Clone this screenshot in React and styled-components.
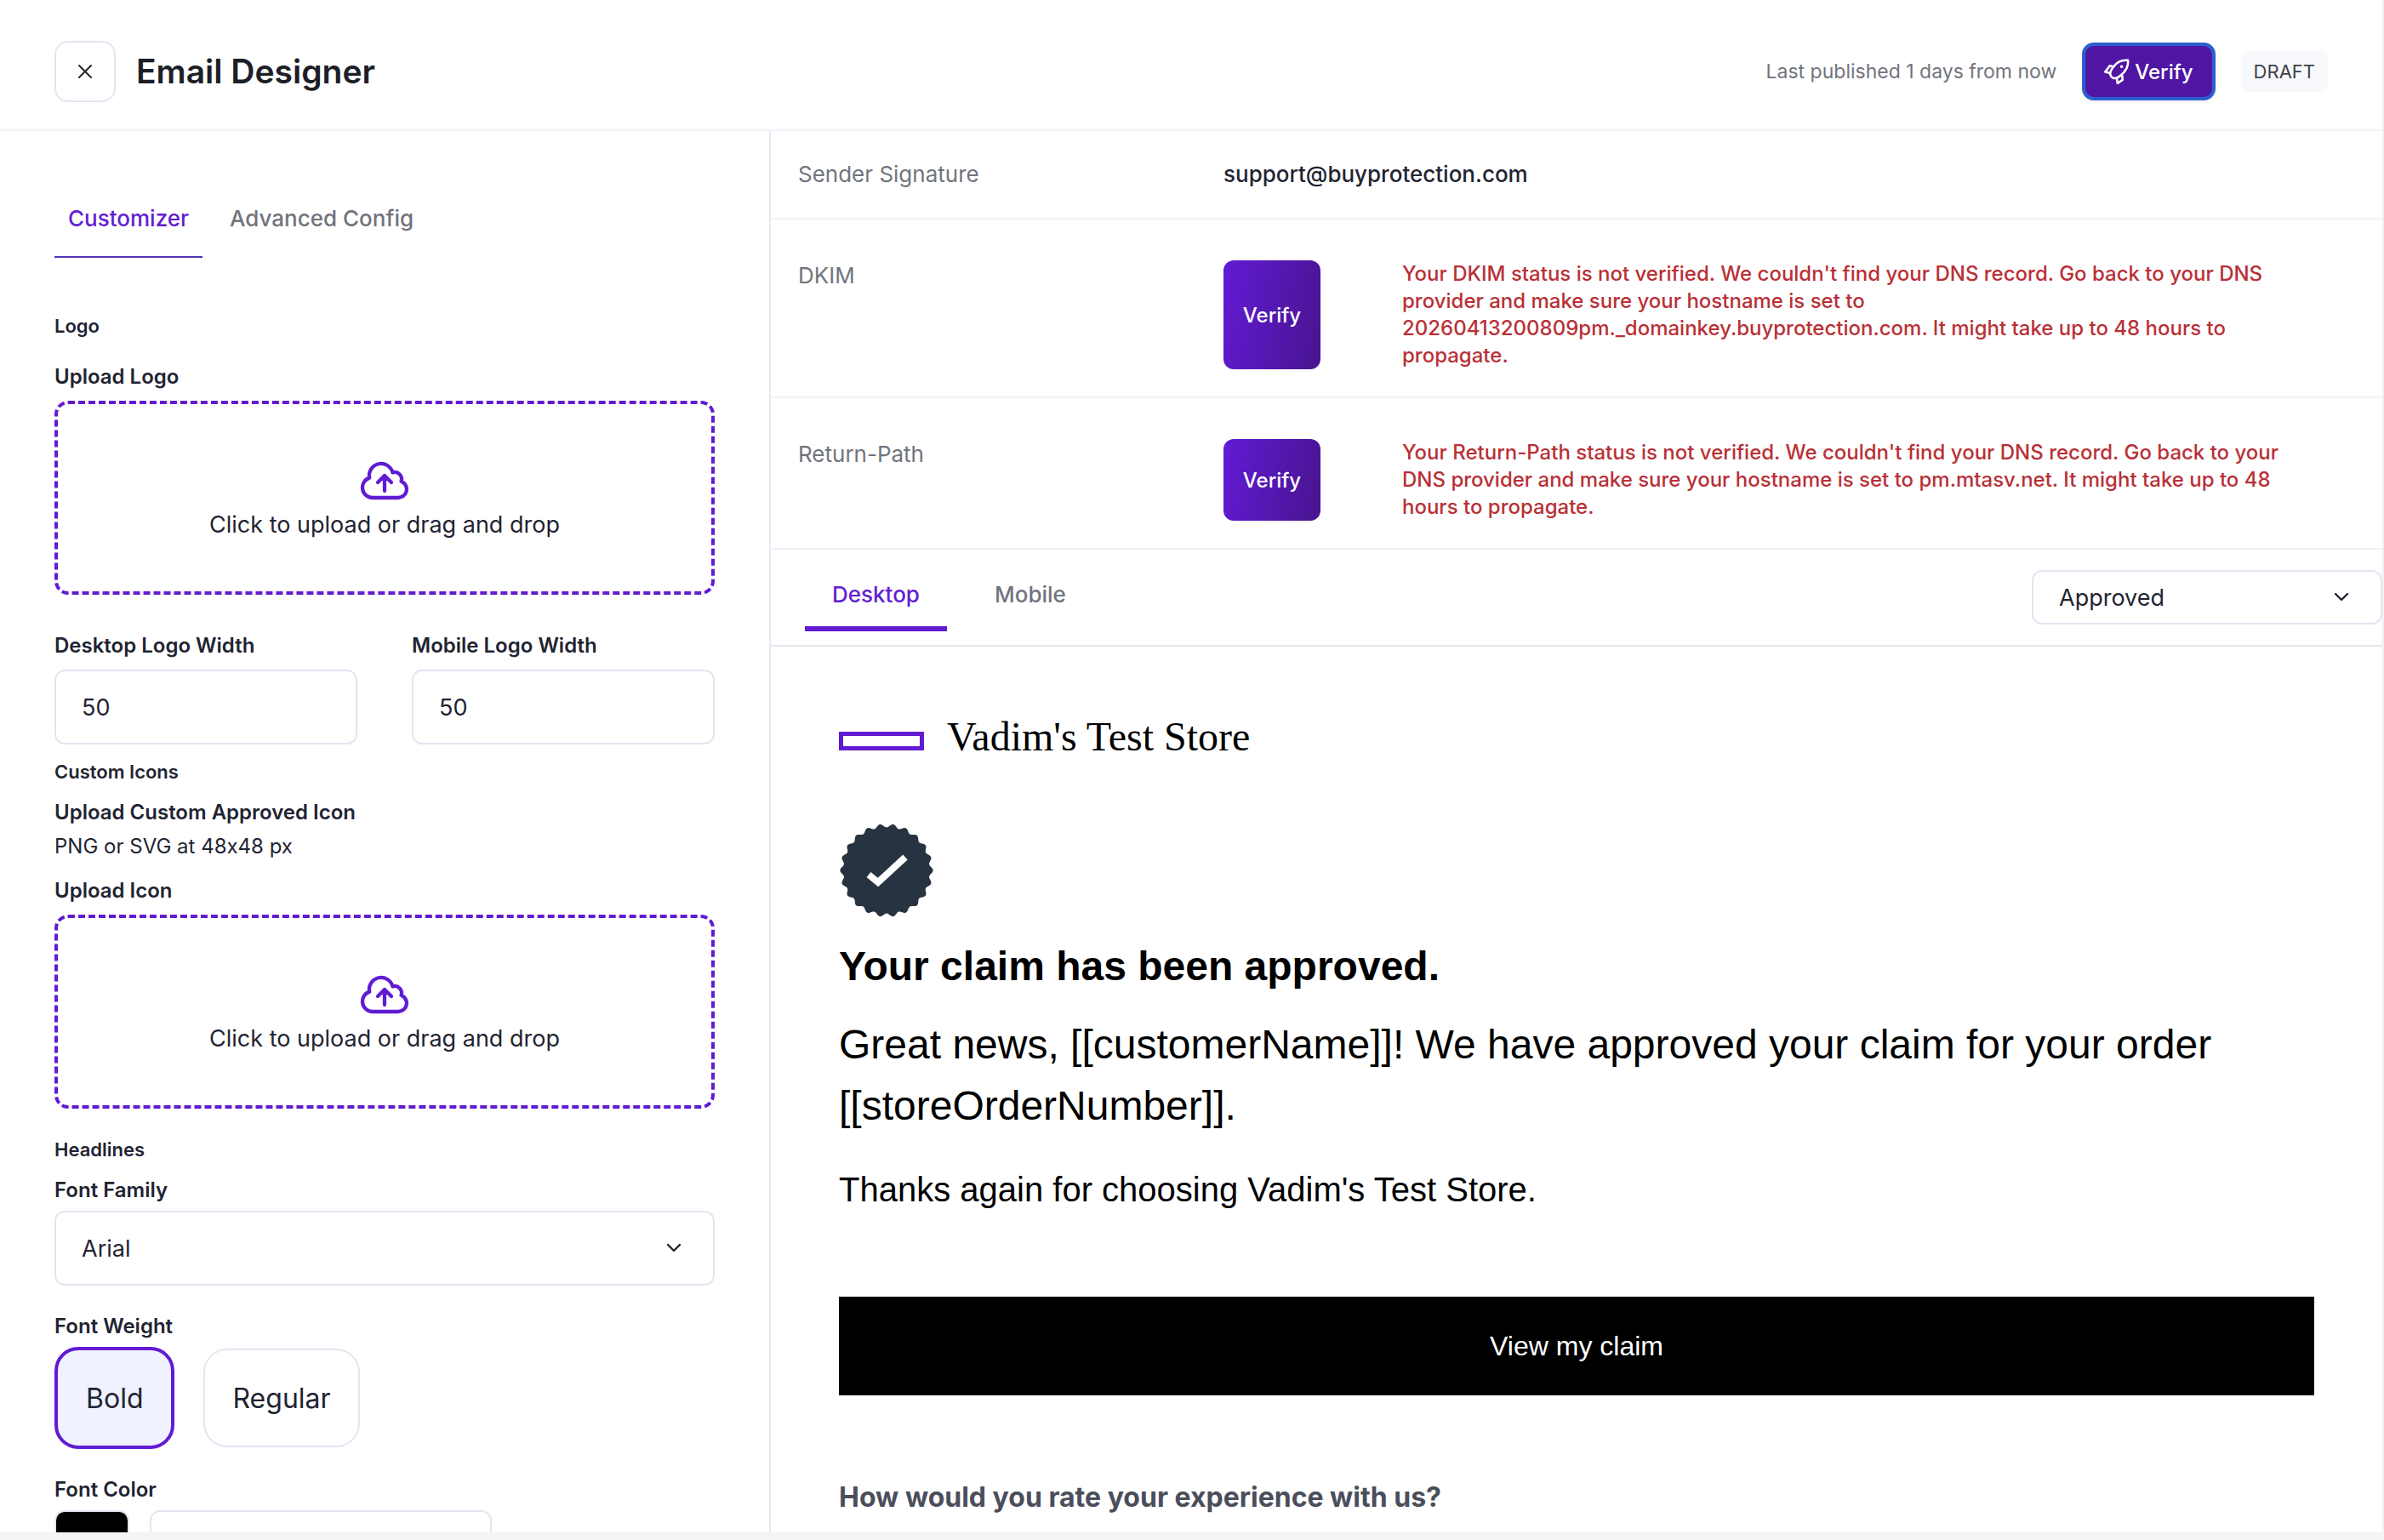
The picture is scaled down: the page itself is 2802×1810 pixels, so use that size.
import { useState } from "react";
import styled, { createGlobalStyle, css } from "styled-components";

const GlobalStyle = createGlobalStyle`
  *, *::before, *::after {
    box-sizing: border-box;
  }

  body {
    margin: 0;
    background: #f4f4f4;
    color: #1f2432;
    font-family: Inter, "Liberation Sans", sans-serif;
    font-size: 24px;
    line-height: 32px;
    font-variant-ligatures: no-contextual;
    -webkit-font-smoothing: antialiased;
  }

  button, input, select {
    font-family: inherit;
    color: inherit;
    margin: 0;
  }

  h1, h2, h3, p, dl, dt, dd {
    margin: 0;
  }
`;

const Page = styled.div`
  display: flex;
  flex-direction: column;
  height: calc(100vh - 9px);
  background: #fff;
  border-right: 2px solid #f1f1f3;
`;

/* ---------- header ---------- */

const Header = styled.header`
  display: flex;
  align-items: center;
  justify-content: space-between;
  flex-shrink: 0;
  padding: 48px 64px 32px;
  border-bottom: 2px solid #f1f2f8;
`;

const HeaderGroup = styled.div`
  display: flex;
  align-items: center;
  gap: ${({ $gap }) => $gap}px;
`;

const CloseButton = styled.button`
  display: grid;
  place-items: center;
  width: 72px;
  height: 72px;
  padding: 0;
  background: #fff;
  border: 2px solid #e2e6f0;
  border-radius: 16px;
  cursor: pointer;
`;

const Title = styled.h1`
  font-size: 39px;
  line-height: 48px;
  font-weight: 600;
  color: #1d1e27;
`;

const Published = styled.span`
  color: #71747d;
  font-size: 23px;
`;

const PublishButton = styled.button`
  display: flex;
  align-items: center;
  gap: 6px;
  height: 68px;
  padding: 0 22px;
  background: #5016a3;
  border: 4px solid #2b5fd0;
  border-radius: 14px;
  box-shadow: 0 2px 4px rgba(0, 0, 0, 0.06);
  color: #fff;
  font-size: 24px;
  font-weight: 500;
  cursor: pointer;
`;

const StatusTag = styled.span`
  padding: 8px 15px;
  background: #f8f9fc;
  border-radius: 8px;
  color: #3f424b;
  font-size: 22px;
`;

/* ---------- layout ---------- */

const Main = styled.main`
  display: grid;
  grid-template-columns: minmax(0, 906fr) minmax(0, 1894fr);
  flex: 1;
  min-height: 0;
`;

const Sidebar = styled.aside`
  padding: 64px 64px 0;
  border-right: 2px solid #e6eaf2;
  overflow: hidden;
`;

const Preview = styled.section`
  overflow: hidden;
`;

const Tabs = styled.div`
  display: flex;
  gap: ${({ $gap }) => $gap}px;
`;

const Tab = styled.button`
  padding: 22px 16px 27px;
  background: none;
  border: 0;
  border-bottom: 2px solid ${({ $active }) => ($active ? "#5433b4" : "transparent")};
  color: ${({ $active }) => ($active ? "#6220d2" : "#71747d")};
  font-size: 26px;
  line-height: 34px;
  font-weight: 500;
  cursor: pointer;
`;

const PreviewTab = styled(Tab)`
  padding: 36px 32px 20px;
  border-bottom: 6px solid ${({ $active }) => ($active ? "#611bd3" : "transparent")};
`;

/* ---------- customizer form ---------- */

const SectionTitle = styled.h2`
  margin-top: ${({ $top }) => $top}px;
  font-size: 22px;
  line-height: 32px;
  font-weight: 600;
`;

const Field = styled.div`
  display: flex;
  flex-direction: column;
  gap: ${({ $gap = 8 }) => $gap}px;
  margin-top: ${({ $top = 0 }) => $top}px;
`;

const labelText = css`
  font-size: 24px;
  line-height: 32px;
  font-weight: 600;
`;

const Label = styled.label`
  ${labelText}
`;

const LabelText = styled.h3`
  ${labelText}
`;

const Hint = styled.p`
  font-size: 24px;
`;

const FieldRow = styled.div`
  display: grid;
  grid-template-columns: 1fr 1fr;
  gap: 64px;
  margin-top: 44px;
`;

const control = css`
  width: 100%;
  height: 88px;
  padding: 0 30px;
  background: #fff;
  border: 2px solid #e2e6f0;
  border-radius: 12px;
  font-size: 27px;
`;

const TextInput = styled.input`
  ${control}
`;

const SelectWrap = styled.div`
  position: relative;

  svg {
    position: absolute;
    top: 50%;
    right: 38px;
    transform: translateY(-50%);
    pointer-events: none;
  }
`;

const Select = styled.select`
  ${control}
  appearance: none;
  cursor: pointer;
`;

const CompactSelect = styled(Select)`
  width: 412px;
  height: 64px;
`;

const DropZone = styled.label`
  display: flex;
  flex-direction: column;
  align-items: center;
  justify-content: center;
  position: relative;
  height: 228px;
  border: 4px dashed #611bd3;
  border-radius: 16px;
  font-size: 27px;
  line-height: 40px;
  cursor: pointer;

  input {
    position: absolute;
    inset: 0;
    opacity: 0;
    cursor: pointer;
  }
`;

const WeightOptions = styled.div`
  display: flex;
  align-items: center;
  gap: 34px;
`;

const WeightButton = styled.button`
  height: ${({ $active }) => ($active ? 120 : 116)}px;
  padding: 0 ${({ $active }) => ($active ? 33 : 32)}px;
  background: ${({ $active }) => ($active ? "#f0f2ff" : "#fff")};
  border: ${({ $active }) => ($active ? "4px solid #611bd3" : "2px solid #e2e6f0")};
  border-radius: 28px;
  font-size: 32px;
  cursor: pointer;
`;

const ColorRow = styled.div`
  display: flex;
  gap: 24px;
`;

const Swatch = styled.input`
  flex-shrink: 0;
  width: 88px;
  height: 88px;
  padding: 0;
  background: #fff;
  border: 2px solid #e2e6f0;
  border-radius: 12px;
  overflow: hidden;

  &::-webkit-color-swatch-wrapper {
    padding: 0;
  }

  &::-webkit-color-swatch {
    border: 0;
  }
`;

const HexInput = styled(TextInput)`
  width: 402px;
`;

/* ---------- domain verification ---------- */

const Row = styled.div`
  display: grid;
  grid-template-columns: 500px minmax(0, 1fr);
  padding: ${({ $plain }) => ($plain ? "33px 32px" : "48px 32px 32px")};
  border-bottom: 2px solid #f1f2f8;
`;

const Term = styled.dt`
  color: #71747d;
  font-size: 26px;
  line-height: 36px;
`;

const Detail = styled.dd`
  display: flex;
  gap: 96px;
  font-size: 26px;
  line-height: 36px;
  font-weight: 500;
`;

const VerifyButton = styled.button`
  flex-shrink: 0;
  width: 114px;
  background: linear-gradient(100deg, #621bd5, #48148f);
  border: 0;
  border-radius: 12px;
  color: #fff;
  font-size: 24px;
  font-weight: 500;
  cursor: pointer;
`;

const ErrorText = styled.p`
  max-width: 1040px;
  color: #b93036;
  font-size: 24px;
  line-height: 32px;
  font-weight: 500;
`;

const PreviewBar = styled.div`
  display: flex;
  align-items: center;
  justify-content: space-between;
  padding: 0 0 16px 40px;
  border-bottom: 2px solid #e2e6ec;

  ${SelectWrap} {
    margin-top: 16px;
  }
`;

/* ---------- email ---------- */

const Email = styled.article`
  padding: 80px;
  color: #000;
  font-family: "Liberation Sans", Arial, sans-serif;
`;

const Brand = styled.div`
  display: flex;
  align-items: baseline;
  gap: 27px;
  height: 64px;
`;

const BrandMark = styled.span`
  width: 100px;
  height: 22px;
  border: 5px solid #611bd3;
`;

const BrandName = styled.span`
  font-family: "Liberation Serif", serif;
  font-size: 48px;
  line-height: 52px;
`;

const Badge = styled.svg`
  display: block;
  margin-top: 64px;
`;

const Headline = styled.h2`
  margin-top: 24px;
  font-size: 48px;
  line-height: 64px;
  font-weight: 700;
`;

const Lead = styled.p`
  margin-top: 24px;
  font-size: 48px;
  line-height: 72px;
`;

const Body = styled.p`
  margin-top: 32px;
  font-size: 40px;
  line-height: 60px;
`;

const ClaimLink = styled.a`
  display: block;
  margin-top: 96px;
  background: #000;
  color: #fff;
  font-size: 32px;
  line-height: 116px;
  text-align: center;
  text-decoration: none;
`;

const RateTitle = styled.h3`
  margin-top: 96px;
  color: #4a4e5b;
  font-family: Inter, sans-serif;
  font-size: 32px;
  line-height: 48px;
  font-weight: 700;
`;

/* ---------- icons ---------- */

const CloseIcon = () => (
  <svg width="20" height="20" viewBox="0 0 20 20" fill="none" stroke="#23252d" strokeWidth="2" strokeLinecap="round" aria-hidden="true">
    <path d="M3 3l14 14M17 3L3 17" />
  </svg>
);

const RocketIcon = () => (
  <svg width="30" height="30" viewBox="0 0 30 30" fill="none" stroke="currentColor" strokeWidth="2.6" strokeLinecap="round" strokeLinejoin="round" aria-hidden="true">
    <path d="M28 1.8C21 1.2 15 4 11 9.500C8.300 13 7 16 7.200 18C7.400 20.500 9.600 22.700 12 23C14.500 23.200 17.500 21.500 20.500 18.800C25.500 14.500 28.800 8.500 28 1.800Z" />
    <path d="M11 9.400L6.800 8.200L1.400 15.400L7 17" />
    <path d="M14.800 22.600L15.800 28.800L21.800 24.800L21 18.600" />
    <circle cx="20.600" cy="9.200" r="1.700" fill="currentColor" stroke="none" />
  </svg>
);

const CloudUploadIcon = () => (
  <svg width="64" height="64" viewBox="0 0 24 24" fill="none" stroke="#611bd3" strokeWidth="1.6" strokeLinecap="round" strokeLinejoin="round" aria-hidden="true">
    <path d="M12 16.500V9.750m0 0 3 3m-3-3-3 3M6.750 19.500a4.500 4.500 0 0 1-1.410-8.775 5.250 5.250 0 0 1 10.233-2.330 3 3 0 0 1 3.758 3.848A3.752 3.752 0 0 1 18 19.500H6.750Z" />
  </svg>
);

const ChevronIcon = () => (
  <svg width="20" height="20" viewBox="0 0 20 20" fill="none" stroke="#1f2432" strokeWidth="2.4" strokeLinecap="round" strokeLinejoin="round" aria-hidden="true">
    <path d="M3 6l7 7 7-7" />
  </svg>
);

const TEETH = 22;

const badgePath = () => {
  const steps = TEETH * 8;
  const points = Array.from({ length: steps }, (_, i) => {
    const angle = (i / steps) * Math.PI * 2;
    const radius = 52.6 + 2.1 * Math.cos(angle * TEETH);
    return `${(55 + radius * Math.cos(angle)).toFixed(2)} ${(55 + radius * Math.sin(angle)).toFixed(2)}`;
  });
  return `M${points.join("L")}Z`;
};

const ApprovedBadge = () => (
  <Badge width="112" height="112" viewBox="-1 0 112 112" role="img" aria-label="Approved">
    <path d={badgePath()} fill="#283341" />
    <path d="M34 60L45 69L77 39.500" fill="none" stroke="#fff" strokeWidth="8" />
  </Badge>
);

/* ---------- parts ---------- */

const UploadField = ({ id, label, top }) => (
  <Field $top={top} $gap={12}>
    <Label htmlFor={id}>{label}</Label>
    <DropZone>
      <CloudUploadIcon />
      Click to upload or drag and drop
      <input id={id} type="file" accept="image/*" />
    </DropZone>
  </Field>
);

const VerifyRow = ({ name, children }) => (
  <Row>
    <Term>{name}</Term>
    <Detail>
      <VerifyButton type="button">Verify</VerifyButton>
      <ErrorText>{children}</ErrorText>
    </Detail>
  </Row>
);

export default function App() {
  const [tab, setTab] = useState("Customizer");
  const [device, setDevice] = useState("Desktop");
  const [weight, setWeight] = useState("Bold");
  const [color, setColor] = useState("#000000");

  return (
    <>
      <GlobalStyle />
      <Page>
        <Header>
          <HeaderGroup $gap={24}>
            <CloseButton type="button" aria-label="Close">
              <CloseIcon />
            </CloseButton>
            <Title>Email Designer</Title>
          </HeaderGroup>
          <HeaderGroup $gap={30}>
            <Published>Last published 1 days from now</Published>
            <PublishButton type="button">
              <RocketIcon />
              Verify
            </PublishButton>
            <StatusTag>DRAFT</StatusTag>
          </HeaderGroup>
        </Header>

        <Main>
          <Sidebar>
            <Tabs role="tablist" $gap={16}>
              {["Customizer", "Advanced Config"].map((name) => (
                <Tab key={name} type="button" role="tab" aria-selected={tab === name} $active={tab === name} onClick={() => setTab(name)}>
                  {name}
                </Tab>
              ))}
            </Tabs>

            <SectionTitle $top={64}>Logo</SectionTitle>
            <UploadField id="logo" label="Upload Logo" top={28} />
            <FieldRow>
              <Field $gap={12}>
                <Label htmlFor="desktop-width">Desktop Logo Width</Label>
                <TextInput id="desktop-width" defaultValue="50" />
              </Field>
              <Field $gap={12}>
                <Label htmlFor="mobile-width">Mobile Logo Width</Label>
                <TextInput id="mobile-width" defaultValue="50" />
              </Field>
            </FieldRow>

            <SectionTitle $top={16}>Custom Icons</SectionTitle>
            <Field $top={16}>
              <LabelText>Upload Custom Approved Icon</LabelText>
              <Hint>PNG or SVG at 48x48 px</Hint>
            </Field>
            <UploadField id="icon" label="Upload Icon" top={20} />

            <SectionTitle $top={32}>Headlines</SectionTitle>
            <Field $top={16}>
              <Label htmlFor="font-family">Font Family</Label>
              <SelectWrap>
                <Select id="font-family" defaultValue="Arial">
                  <option>Arial</option>
                  <option>Georgia</option>
                </Select>
                <ChevronIcon />
              </SelectWrap>
            </Field>
            <Field $top={32}>
              <LabelText id="font-weight">Font Weight</LabelText>
              <WeightOptions role="group" aria-labelledby="font-weight">
                {["Bold", "Regular"].map((name) => (
                  <WeightButton key={name} type="button" aria-pressed={weight === name} $active={weight === name} onClick={() => setWeight(name)}>
                    {name}
                  </WeightButton>
                ))}
              </WeightOptions>
            </Field>
            <Field $top={32}>
              <Label htmlFor="font-color">Font Color</Label>
              <ColorRow>
                <Swatch id="font-color" type="color" value={color} onChange={(e) => setColor(e.target.value)} />
                <HexInput aria-label="Font color hex" value={color} onChange={(e) => setColor(e.target.value)} />
              </ColorRow>
            </Field>
          </Sidebar>

          <Preview>
            <dl>
              <Row $plain>
                <Term>Sender Signature</Term>
                <Detail>support@buyprotection.com</Detail>
              </Row>
              <VerifyRow name="DKIM">
                Your DKIM status is not verified. We couldn't find your DNS record. Go back to your DNS provider and make sure your hostname is set to 20260413200809pm._domainkey.buyprotection.com. It might take up to 48 hours to propagate.
              </VerifyRow>
              <VerifyRow name="Return-Path">
                Your Return-Path status is not verified. We couldn't find your DNS record. Go back to your DNS provider and make sure your hostname is set to pm.mtasv.net. It might take up to 48 hours to propagate.
              </VerifyRow>
            </dl>

            <PreviewBar>
              <Tabs role="tablist" $gap={24}>
                {["Desktop", "Mobile"].map((name) => (
                  <PreviewTab key={name} type="button" role="tab" aria-selected={device === name} $active={device === name} onClick={() => setDevice(name)}>
                    {name}
                  </PreviewTab>
                ))}
              </Tabs>
              <SelectWrap>
                <CompactSelect aria-label="Email template" defaultValue="Approved">
                  <option>Approved</option>
                  <option>Denied</option>
                </CompactSelect>
                <ChevronIcon />
              </SelectWrap>
            </PreviewBar>

            <Email>
              <Brand>
                <BrandMark />
                <BrandName>Vadim's Test Store</BrandName>
              </Brand>
              <ApprovedBadge />
              <Headline>Your claim has been approved.</Headline>
              <Lead>
                Great news, [[customerName]]! We have approved your claim for your order [[storeOrderNumber]].
              </Lead>
              <Body>Thanks again for choosing Vadim's Test Store.</Body>
              <ClaimLink href="#claim">View my claim</ClaimLink>
              <RateTitle>How would you rate your experience with us?</RateTitle>
            </Email>
          </Preview>
        </Main>
      </Page>
    </>
  );
}
